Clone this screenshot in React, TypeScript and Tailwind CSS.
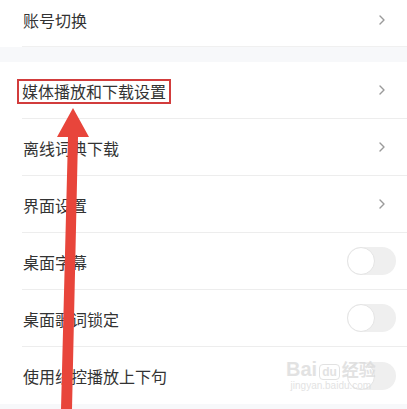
import React from "react";

const Chevron = () => (
  <svg width="8" height="12" viewBox="0 0 8 12" className="shrink-0">
    <polyline points="2,2 6,6 2,10" fill="none" stroke="#9a9a9a" strokeWidth="1.4" strokeLinecap="round" strokeLinejoin="round" />
  </svg>
);

const Toggle = () => (
  <div className="relative h-[28px] w-[49px] shrink-0 rounded-full bg-[#efefef]">
    <div className="absolute left-0 top-0 h-[28px] w-[28px] rounded-full border border-[#e4e4e4] bg-white" />
  </div>
);

type RowProps = { label: React.ReactNode; right: "chevron" | "toggle"; last?: boolean; h?: string };

const Row = ({ label, right, last }: RowProps) => (
  <div className="bg-white pl-[22px]">
    <div
      className={`flex h-[57px] items-center justify-between ${last ? "" : "border-b border-[#ededed]"} ${right === "chevron" ? "pr-[21px]" : "pr-[11px]"}`}
    >
      <span className="pt-[2px] pl-[1px] text-[16px] leading-[21px] text-[#333333]">{label}</span>
      {right === "chevron" ? <Chevron /> : <Toggle />}
    </div>
  </div>
);

export default function App() {
  return (
    <div
      className="relative h-[409px] w-[407px] overflow-hidden bg-white"
      style={{ fontFamily: '"Noto Sans CJK SC", "Noto Sans", sans-serif' }}
    >
      <div className="bg-white pl-[22px]">
        <div className="flex h-[47px] items-center justify-between pb-[6px] pr-[21px] border-b border-[#f0f0f0]">
          <span className="pl-[1px] text-[16px] leading-[21px] text-[#333333]">账号切换</span>
          <Chevron />
        </div>
      </div>
      <div className="h-[15px] bg-[#f7f8fa]" />
      <Row
        right="chevron"
        label={
          <span className="-ml-[6px] inline-block border-2 border-[#d23c3c] px-[3px] leading-[21px]">
            媒体播放和下载设置
          </span>
        }
      />
      <Row right="chevron" label="离线词典下载" />
      <Row right="chevron" label="界面设置" />
      <Row right="toggle" label="桌面字幕" />
      <Row right="toggle" label="桌面歌词锁定" />
      <Row right="toggle" label="使用线控播放上下句" last />
      <div className="h-[10px] bg-[#f7f8fa]" />

      <div className="pointer-events-none absolute left-[286px] top-[358px] flex flex-col items-center text-[#dcdcdc] opacity-80">
        <div className="flex items-end gap-[2px] text-[20px] font-bold leading-[22px]" style={{ fontFamily: '"Liberation Sans", "Noto Sans CJK SC", sans-serif' }}>
          <span>Bai</span>
          <span className="rounded-[4px] border border-[#dcdcdc] px-[2px] text-[12px] leading-[14px]">du</span>
          <span className="text-[17px]" style={{ fontFamily: '"Noto Sans CJK SC", sans-serif' }}>经验</span>
        </div>
        <div className="text-[10px] leading-[12px]" style={{ fontFamily: '"Liberation Sans", sans-serif' }}>jingyan.baidu.com</div>
      </div>

      <svg className="pointer-events-none absolute left-0 top-0" width="407" height="409" viewBox="0 0 407 409">
        <polygon points="73,108 89,137 78,137 72,409 61,409 68,137 57,137" fill="#e8453b" />
      </svg>
    </div>
  );
}
